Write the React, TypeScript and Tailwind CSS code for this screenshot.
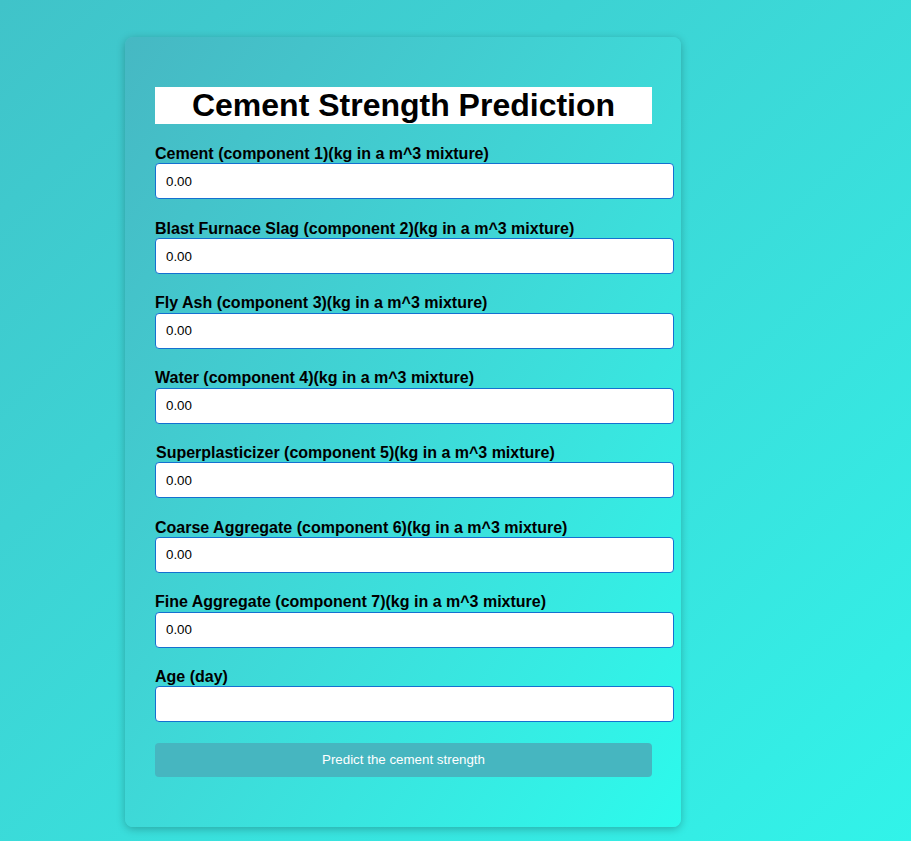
import { useState } from "react";

const FIELDS = [
  { name: "cement", label: "Cement (component 1)(kg in a m^3 mixture)", value: "0.00" },
  { name: "slag", label: "Blast Furnace Slag (component 2)(kg in a m^3 mixture)", value: "0.00" },
  { name: "ash", label: "Fly Ash (component 3)(kg in a m^3 mixture)", value: "0.00" },
  { name: "water", label: "Water (component 4)(kg in a m^3 mixture)", value: "0.00" },
  { name: "superplasticizer", label: "Superplasticizer (component 5)(kg in a m^3 mixture)", value: "0.00", indent: true },
  { name: "coarse", label: "Coarse Aggregate (component 6)(kg in a m^3 mixture)", value: "0.00" },
  { name: "fine", label: "Fine Aggregate (component 7)(kg in a m^3 mixture)", value: "0.00" },
  { name: "age", label: "Age (day)", value: "" },
];

export default function App() {
  const [values, setValues] = useState<Record<string, string>>(
    Object.fromEntries(FIELDS.map((f) => [f.name, f.value]))
  );

  return (
    <div
      className="min-h-[841px] w-full bg-gradient-to-br from-[#40c3c9] to-[#31f3e9] pt-[37px] pb-[14px]"
      style={{ fontFamily: '"Liberation Sans", Arial, sans-serif' }}
    >
      <div className="ml-[125px] w-[556px] rounded-lg bg-gradient-to-br from-[#46b8c3] to-[#2cfaec] px-[30px] pt-[50px] pb-[50px] shadow-[0_2px_8px_rgba(0,0,0,0.25)]">
        {/* Title */}
        <h1 className="w-[497px] bg-white text-center text-[32px] font-bold leading-[37px] text-black">
          Cement Strength Prediction
        </h1>

        <form className="mt-[21px]" onSubmit={(e) => e.preventDefault()}>
          {FIELDS.map((f) => (
            <div key={f.name} className="mb-[20.3px]">
              <label
                htmlFor={f.name}
                className={`block text-[16px] font-bold leading-[18.4px] text-black ${f.indent ? "pl-px" : ""}`}
              >
                {f.label}
              </label>
              <input
                id={f.name}
                name={f.name}
                value={values[f.name]}
                onChange={(e) => setValues({ ...values, [f.name]: e.target.value })}
                className="block h-[36px] w-[519px] rounded-[4px] border border-[#1570d0] bg-white px-[10px] text-[13.33px] text-black outline-none"
              />
            </div>
          ))}

          <button
            type="submit"
            className="block h-[34px] w-[497px] rounded-[4px] bg-[#46b6c0] text-[13.33px] text-white"
          >
            Predict the cement strength
          </button>
        </form>
      </div>
    </div>
  );
}
